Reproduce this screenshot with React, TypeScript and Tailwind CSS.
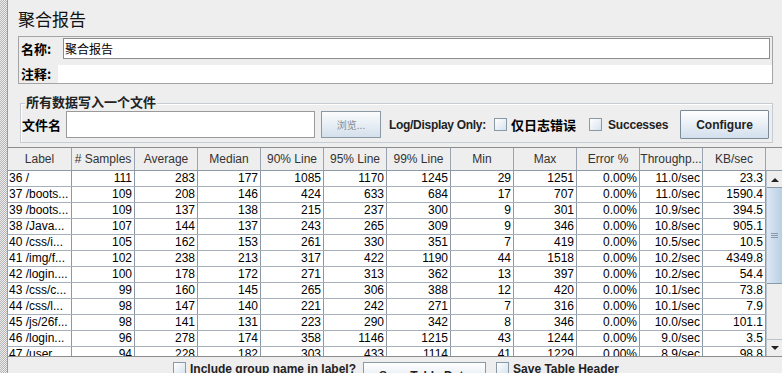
import React from "react";

const cols = [
  { name: "Label", w: "w-[64px]" },
  { name: "# Samples", w: "w-[63px]" },
  { name: "Average", w: "w-[63px]" },
  { name: "Median", w: "w-[63px]" },
  { name: "90% Line", w: "w-[63px]" },
  { name: "95% Line", w: "w-[63px]" },
  { name: "99% Line", w: "w-[64px]" },
  { name: "Min", w: "w-[63px]" },
  { name: "Max", w: "w-[63px]" },
  { name: "Error %", w: "w-[63px]" },
  { name: "Throughp...", w: "w-[63px]" },
  { name: "KB/sec", w: "w-[63px]" },
];

const rows: string[][] = [
  ["36 /", "111", "283", "177", "1085", "1170", "1245", "29", "1251", "0.00%", "11.0/sec", "23.3"],
  ["37 /boots...", "109", "208", "146", "424", "633", "684", "17", "707", "0.00%", "11.0/sec", "1590.4"],
  ["39 /boots...", "109", "137", "138", "215", "237", "300", "9", "301", "0.00%", "10.9/sec", "394.5"],
  ["38 /Java...", "107", "144", "137", "243", "265", "309", "9", "346", "0.00%", "10.8/sec", "905.1"],
  ["40 /css/i...", "105", "162", "153", "261", "330", "351", "7", "419", "0.00%", "10.5/sec", "10.5"],
  ["41 /img/f...", "102", "238", "213", "317", "422", "1190", "44", "1518", "0.00%", "10.2/sec", "4349.8"],
  ["42 /login....", "100", "178", "172", "271", "313", "362", "13", "397", "0.00%", "10.2/sec", "54.4"],
  ["43 /css/c...", "99", "160", "145", "265", "306", "388", "12", "420", "0.00%", "10.1/sec", "73.8"],
  ["44 /css/l...", "98", "147", "140", "221", "242", "271", "7", "316", "0.00%", "10.1/sec", "7.9"],
  ["45 /js/26f...", "98", "141", "131", "223", "290", "342", "8", "346", "0.00%", "10.0/sec", "101.1"],
  ["46 /login...", "96", "278", "174", "358", "1146", "1215", "43", "1244", "0.00%", "9.0/sec", "3.5"],
  ["47 /user...", "94", "228", "182", "303", "433", "1114", "41", "1229", "0.00%", "8.9/sec", "98.8"],
];

function CheckBox() {
  return (
    <span className="inline-block h-[13px] w-[13px] shrink-0 border border-[#8a99a6] bg-gradient-to-br from-[#ffffff] to-[#d6e2ee]" />
  );
}

function Arrow({ up }: { up?: boolean }) {
  return (
    <div className="flex h-[16px] w-full shrink-0 items-center justify-center bg-[#eeeeee]">
      <svg width="8" height="5" viewBox="0 0 8 5">
        <path d={up ? "M0 5 L4 1 L8 5 Z" : "M0 0 L8 0 L4 4 Z"} fill="#222" />
      </svg>
    </div>
  );
}

export default function App() {
  return (
    <div className="flex h-[373px] w-[782px] overflow-hidden bg-[#eeeeee] font-['Liberation_Sans','Noto_Sans_CJK_SC',sans-serif] text-black">
      <div className="w-[7px] shrink-0 bg-[repeating-conic-gradient(#b4b4b4_0_25%,#eeeeee_0_50%)] bg-[length:2px_2px]" />
      <div className="flex min-w-0 flex-1 flex-col border-l border-[#9a9a9a]">
        <div className="shrink-0 pl-[10px] pt-[8px] text-[17px] leading-[22px] font-['Noto_Sans_CJK_SC',sans-serif] text-[#111]">
          聚合报告
        </div>

        <div className="ml-[10px] mr-[9px] mt-[6px] flex shrink-0 flex-col border border-[#a4a4a4]">
          <div className="flex h-[26px] items-start pt-[1px]">
            <span className="w-[44px] shrink-0 pl-[2px] pt-[2px] text-[13px] font-bold leading-[17px] font-['Noto_Sans_CJK_SC',sans-serif]">
              名称:
            </span>
            <div className="mr-[2px] flex h-[21px] flex-1 items-center border border-[#8c8c8c] bg-white pl-[1px] text-[12px] font-['Noto_Sans_CJK_SC',sans-serif]">
              聚合报告
            </div>
          </div>
          <div className="flex h-[20px] items-end">
            <span className="w-[39px] shrink-0 self-center pl-[2px] text-[13px] font-bold leading-[17px] font-['Noto_Sans_CJK_SC',sans-serif]">
              注释:
            </span>
            <div className="h-[18px] flex-1 bg-white" />
          </div>
        </div>

        <div className="relative ml-[12px] mr-[9px] mt-[19px] h-[40px] shrink-0 border border-[#c6ccd2] shadow-[inset_1px_1px_0_#ffffff]">
          <span className="absolute left-[4px] top-[-11px] whitespace-nowrap bg-[#eeeeee] px-[1px] text-[13px] font-bold leading-[17px] text-[#222] font-['Noto_Sans_CJK_SC',sans-serif]">
            所有数据写入一个文件
          </span>
          <div className="flex h-full items-center whitespace-nowrap pt-[3px]">
            <span className="w-[45px] shrink-0 pl-[1px] text-[13px] font-bold font-['Noto_Sans_CJK_SC',sans-serif]">
              文件名
            </span>
            <div className="h-[27px] w-[249px] shrink-0 border border-[#9a9a9a] bg-white" />
            <button className="ml-[6px] flex h-[27px] w-[60px] shrink-0 items-center justify-center border border-[#8a99a6] bg-gradient-to-b from-[#fbfcfd] to-[#d4e0ec] text-[10px] text-[#8a8a8a] font-['Noto_Sans_CJK_SC',sans-serif]">
              浏览...
            </button>
            <span className="ml-[8px] w-[97px] shrink-0 text-[12px] font-bold tracking-[-0.3px] text-[#222]">
              Log/Display Only:
            </span>
            <span className="ml-[8px] flex shrink-0 items-center">
              <CheckBox />
            </span>
            <span className="ml-[4px] w-[64px] shrink-0 text-[13px] font-bold font-['Noto_Sans_CJK_SC',sans-serif]">
              仅日志错误
            </span>
            <span className="ml-[14px] flex shrink-0 items-center">
              <CheckBox />
            </span>
            <span className="ml-[6px] w-[61px] shrink-0 text-[12px] font-bold tracking-[-0.2px] text-[#222]">Successes</span>
            <button className="ml-[11px] flex h-[29px] w-[89px] shrink-0 items-center justify-center rounded-[1px] border border-[#7a8a99] bg-gradient-to-b from-[#ffffff] to-[#d2dfec] text-[12px] font-bold text-[#222]">
              Configure
            </button>
          </div>
        </div>

        <div className="mt-[4px] flex shrink-0 flex-col border-y border-[#8c8c8c] bg-white">
          <div className="flex h-[23px] border-b border-[#8e9aa6] bg-[#eeeeee]">
            {cols.map((c) => (
              <div
                key={c.name}
                className={`${c.w} flex shrink-0 items-center justify-center border-r border-[#9aa4ae] text-[12px] text-[#333] whitespace-nowrap`}
              >
                {c.name}
              </div>
            ))}
            <div className="flex-1" />
          </div>
          <div className="flex h-[185px] overflow-hidden">
            <div className="flex flex-col">
              {rows.map((r, i) => (
                <div key={i} className="flex h-[16px] shrink-0 border-b border-[#a7b0ba]">
                  {r.map((v, j) => (
                    <div
                      key={j}
                      className={`${cols[j].w} shrink-0 overflow-hidden whitespace-nowrap border-r border-[#8b98a6] text-[12px] leading-[15px] ${
                        j === 0 ? "pl-[1px] text-left" : "pr-[2px] text-right"
                      }`}
                    >
                      {v}
                    </div>
                  ))}
                </div>
              ))}
            </div>
            <div className="flex flex-1 flex-col border-l border-[#b8c4d0] bg-[#eeeeee]">
              <Arrow up />
              <div className="flex h-[97px] shrink-0 items-center justify-center border-y border-[#8a99a6] bg-gradient-to-r from-[#dce7f3] to-[#b9cfe5]">
                <div className="flex flex-col gap-[1px]">
                  <span className="h-[1px] w-[7px] bg-[#8a99a6]" />
                  <span className="h-[1px] w-[7px] bg-[#8a99a6]" />
                  <span className="h-[1px] w-[7px] bg-[#8a99a6]" />
                </div>
              </div>
              <div className="flex-1" />
              <div className="shrink-0 border-t border-[#b8c4d0]">
                <Arrow />
              </div>
            </div>
          </div>
        </div>

        <div className="flex shrink-0 items-start whitespace-nowrap pl-[165px] pt-[5px]">
          <CheckBox />
          <span className="ml-[4px] text-[12px] font-bold leading-[14px] text-[#222]">Include group name in label?</span>
          <button className="ml-[7px] flex h-[27px] w-[123px] shrink-0 items-center justify-center border border-[#8a99a6] bg-gradient-to-b from-[#ffffff] to-[#d2dfec] text-[12px] font-bold text-[#222]">
            Save Table Data
          </button>
          <span className="ml-[10px] flex">
            <CheckBox />
          </span>
          <span className="ml-[4px] text-[12px] font-bold leading-[14px] text-[#222]">Save Table Header</span>
        </div>
      </div>
    </div>
  );
}
